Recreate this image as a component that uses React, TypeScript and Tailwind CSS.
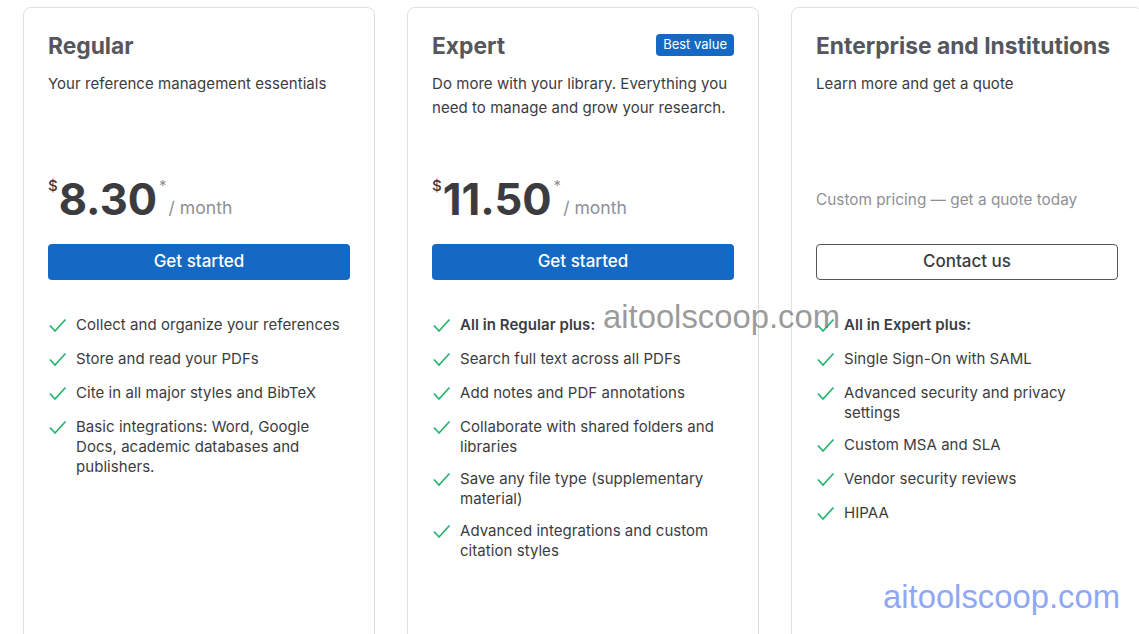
const ff = "font-['Inter','Liberation_Sans',sans-serif]";

function Check() {
  return (
    <svg className="w-5 h-5 shrink-0" viewBox="0 0 20 20" fill="none" stroke="#2ab573" strokeWidth="1.8">
      <path d="M2 10.5 L7 16 L17.5 4.5" />
    </svg>
  );
}

function Feature({ text, bold }: { text: string; bold?: boolean }) {
  return (
    <li className="flex gap-2 min-h-[22px]">
      <Check />
      <span className={`text-[15px] leading-5 tracking-[0.05px] text-[#3c3c40] ${bold ? "font-semibold" : ""}`}>{text}</span>
    </li>
  );
}

type Plan = {
  name: string;
  desc: string;
  price?: string;
  badge?: boolean;
  custom?: string;
  cta: string;
  features: { text: string; bold?: boolean }[];
};

const plans: Plan[] = [
  {
    name: "Regular",
    desc: "Your reference management essentials",
    price: "8.30",
    cta: "Get started",
    features: [
      { text: "Collect and organize your references" },
      { text: "Store and read your PDFs" },
      { text: "Cite in all major styles and BibTeX" },
      { text: "Basic integrations: Word, Google Docs, academic databases and publishers." },
    ],
  },
  {
    name: "Expert",
    badge: true,
    desc: "Do more with your library. Everything you need to manage and grow your research.",
    price: "11.50",
    cta: "Get started",
    features: [
      { text: "All in Regular plus:", bold: true },
      { text: "Search full text across all PDFs" },
      { text: "Add notes and PDF annotations" },
      { text: "Collaborate with shared folders and libraries" },
      { text: "Save any file type (supplementary material)" },
      { text: "Advanced integrations and custom citation styles" },
    ],
  },
  {
    name: "Enterprise and Institutions",
    desc: "Learn more and get a quote",
    custom: "Custom pricing — get a quote today",
    cta: "Contact us",
    features: [
      { text: "All in Expert plus:", bold: true },
      { text: "Single Sign-On with SAML" },
      { text: "Advanced security and privacy settings" },
      { text: "Custom MSA and SLA" },
      { text: "Vendor security reviews" },
      { text: "HIPAA" },
    ],
  },
];

function Card({ plan }: { plan: Plan }) {
  return (
    <div className="w-[352px] h-[700px] shrink-0 bg-white border border-[#e0e0e0] rounded-lg px-6 pt-5">
      <div className="relative h-[36px]">
        <h2 className="text-[22.8px] leading-9 font-bold text-[#55575c] whitespace-nowrap">{plan.name}</h2>
        {plan.badge && (
          <span className="absolute right-0 top-[6px] h-[22px] px-[7px] rounded bg-[#1469c4] text-white text-[13px] leading-[21px]">Best value</span>
        )}
      </div>
      <p className="mt-2 h-[95px] text-[15px] leading-6 tracking-[0.05px] text-[#3c3c40]">{plan.desc}</p>
      <div className="h-[56px] flex items-end">
        {plan.price ? (
          <div className="flex items-start text-[#3c3c40]">
            <span className="text-[15px] leading-4 font-medium mt-[3px] mr-[1px]">$</span>
            <span className="text-[43.5px] leading-[48px] font-bold">{plan.price}</span>
            <span className="text-[15px] leading-4 text-[#8f9096] ml-[2px] mt-[3px]">*</span>
            <span className="text-[17.6px] leading-6 text-[#8f9096] ml-[2px] mt-[21px]">/ month</span>
          </div>
        ) : (
          <span className="text-[15.35px] leading-6 text-[#8f9096] mb-[11px]">{plan.custom}</span>
        )}
      </div>
      <button
        className={`mt-[21px] w-full h-9 pb-[2px] rounded text-[17px] leading-[32px] font-medium ${
          plan.price ? "bg-[#1469c4] text-white" : "bg-white text-[#3c3c40] border border-[#55575c]"
        }`}
      >
        {plan.cta}
      </button>
      <ul className="mt-[35px] flex flex-col gap-3">
        {plan.features.map((f) => (
          <Feature key={f.text} text={f.text} bold={f.bold} />
        ))}
      </ul>
    </div>
  );
}

export default function App() {
  return (
    <div className={`relative w-[1139px] h-[634px] overflow-hidden bg-white ${ff}`}>
      <div className="flex gap-8 pl-[23px] pt-[7px]">
        {plans.map((p) => (
          <Card key={p.name} plan={p} />
        ))}
      </div>
      <span className="absolute left-[603px] top-[299px] text-[32.8px] leading-9 text-[#6e6e6e]/70 font-['Liberation_Sans',sans-serif]">aitoolscoop.com</span>
      <span className="absolute left-[883px] top-[579px] text-[32.8px] leading-9 text-[#8fa8f5] font-['Liberation_Sans',sans-serif]">aitoolscoop.com</span>
    </div>
  );
}
